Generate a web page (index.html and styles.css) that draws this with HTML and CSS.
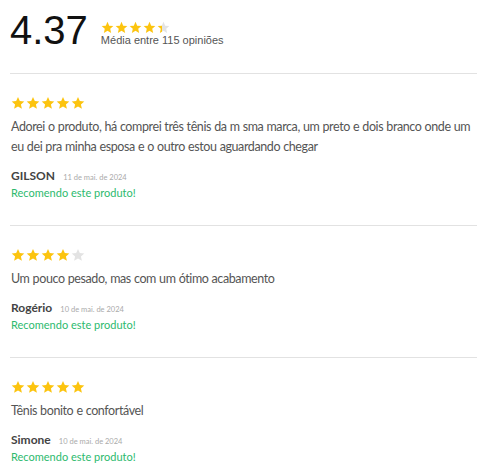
FILE: index.html
```html
<!DOCTYPE html>
<html lang="pt-BR">

<head>
    <meta charset="UTF-8">
    <meta name="viewport" content="width=device-width, initial-scale=1.0">
    <title>Avaliações</title>
    <link rel="stylesheet" href="styles.css">
</head>

<body>
    <svg width="0" height="0" class="defs">
        <defs>
            <symbol id="star" viewBox="0 0 24 24">
                <path d="M12 1.5l3.1 7.1 7.7.7-5.8 5.1 1.7 7.6L12 18.1 5.3 22l1.7-7.6L1.2 9.3l7.7-.7z"/>
            </symbol>
            <linearGradient id="partial">
                <stop offset="37%" stop-color="#fcc40f"/>
                <stop offset="37%" stop-color="#e3e3e3"/>
            </linearGradient>
        </defs>
    </svg>

    <div class="reviews">
        <header class="summary">
            <span class="score">4.37</span>
            <div class="summary-info">
                <div class="stars small">
                    <svg class="star on"><use href="#star"/></svg>
                    <svg class="star on"><use href="#star"/></svg>
                    <svg class="star on"><use href="#star"/></svg>
                    <svg class="star on"><use href="#star"/></svg>
                    <svg class="star part"><use href="#star"/></svg>
                </div>
                <span class="count">Média entre 115 opiniões</span>
            </div>
        </header>

        <div class="review">
            <div class="stars">
                <svg class="star on"><use href="#star"/></svg>
                <svg class="star on"><use href="#star"/></svg>
                <svg class="star on"><use href="#star"/></svg>
                <svg class="star on"><use href="#star"/></svg>
                <svg class="star on"><use href="#star"/></svg>
            </div>
            <p class="text">Adorei o produto, há comprei três tênis da m sma marca, um preto e dois branco onde um eu dei pra minha esposa e o outro estou aguardando chegar</p>
            <div class="author"><span class="name">GILSON</span> <span class="date">11 de mai. de 2024</span></div>
            <div class="recommend">Recomendo este produto!</div>
        </div>

        <div class="review">
            <div class="stars">
                <svg class="star on"><use href="#star"/></svg>
                <svg class="star on"><use href="#star"/></svg>
                <svg class="star on"><use href="#star"/></svg>
                <svg class="star on"><use href="#star"/></svg>
                <svg class="star"><use href="#star"/></svg>
            </div>
            <p class="text">Um pouco pesado, mas com um ótimo acabamento</p>
            <div class="author"><span class="name">Rogério</span> <span class="date">10 de mai. de 2024</span></div>
            <div class="recommend">Recomendo este produto!</div>
        </div>

        <div class="review">
            <div class="stars">
                <svg class="star on"><use href="#star"/></svg>
                <svg class="star on"><use href="#star"/></svg>
                <svg class="star on"><use href="#star"/></svg>
                <svg class="star on"><use href="#star"/></svg>
                <svg class="star on"><use href="#star"/></svg>
            </div>
            <p class="text">Tênis bonito e confortável</p>
            <div class="author"><span class="name">Simone</span> <span class="date">10 de mai. de 2024</span></div>
            <div class="recommend">Recomendo este produto!</div>
        </div>
    </div>
</body>

</html>
```

FILE: styles.css
```css
/* Reset */
* {
    margin: 0;
    padding: 0;
    box-sizing: border-box;
}

body {
    background: #fff;
    color: #555;
    font-family: Lato, sans-serif;
}

.defs {
    position: absolute;
}

.reviews {
    width: 477px;
    padding-left: 10px;
}

/* Summary header */
.summary {
    display: flex;
    align-items: flex-start;
    padding-top: 10px;
    padding-bottom: 23px;
    border-bottom: 1px solid #e2e2e2;
}

.score {
    font-family: 'Liberation Sans', Arial, sans-serif;
    font-size: 40px;
    line-height: 40px;
    color: #111;
}

.summary-info {
    margin-left: 13px;
    padding-top: 11px;
}

.count {
    display: block;
    font-family: 'Liberation Sans', Arial, sans-serif;
    font-size: 11px;
    line-height: 13px;
    color: #555;
}

/* Stars */
.stars {
    display: flex;
    gap: 1px;
}

.star {
    width: 14px;
    height: 14px;
    fill: #e3e3e3;
}

.star.on {
    fill: #fcc40f;
}

.star.part {
    fill: url(#partial);
}

.stars.small .star {
    width: 13px;
    height: 13px;
}

/* Review */
.review {
    padding: 22px 0 25px 1px;
    border-bottom: 1px solid #e2e2e2;
}

.review:last-child {
    border-bottom: none;
}

.review .text {
    margin-top: 7px;
    font-size: 12.5px;
    line-height: 20px;
    letter-spacing: -0.4px;
    word-spacing: 0.3px;
    color: #555;
}

.author {
    margin-top: 9px;
    line-height: 16px;
}

.name {
    font-size: 12px;
    font-weight: 700;
    color: #444;
}

.date {
    margin-left: 4px;
    font-size: 7.5px;
    color: #aaa;
}

.recommend {
    margin-top: -1px;
    font-size: 11px;
    line-height: 15px;
    color: #2dba6e;
}
```
